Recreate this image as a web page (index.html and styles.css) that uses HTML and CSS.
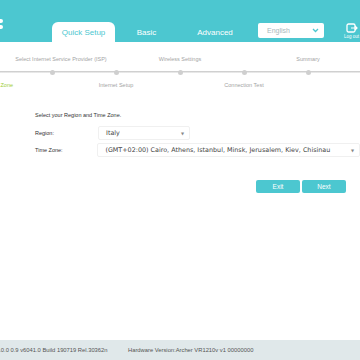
FILE: index.html
```html
<!DOCTYPE html>
<html>
<head>
<meta charset="utf-8">
<link rel="stylesheet" href="styles.css">
</head>
<body>
<div class="page">
  <header class="top">
    <div class="logo"><span class="logo-dot"></span><span class="logo-dot"></span></div>
    <nav class="tabs">
      <div class="tab active">Quick Setup</div>
      <div class="tab">Basic</div>
      <div class="tab adv">Advanced</div>
    </nav>
    <div class="lang"><span>English</span>
      <svg class="chev" width="7" height="5" viewBox="0 0 7 5"><path d="M1 1 L3.5 3.5 L6 1" fill="none" stroke="#4cc7d0" stroke-width="1.3"/></svg>
    </div>
    <div class="logout">
      <svg width="12" height="10" viewBox="0 0 12 10"><rect x="1" y="1" width="8" height="8" rx="1.5" fill="none" stroke="#fff" stroke-width="1.3"/><path d="M5 5 H11 M9 3 L11 5 L9 7" fill="none" stroke="#fff" stroke-width="1.2"/></svg>
      <span>Log out</span>
    </div>
  </header>

  <section class="steps">
    <div class="step done"><div class="lt"></div><div class="track"><i></i></div><div class="lb green first">Time Zone</div></div>
    <div class="step"><div class="lt isp">Select Internet Service Provider (ISP)</div><div class="track"><i></i></div><div class="lb"></div></div>
    <div class="step"><div class="lt"></div><div class="track"><i></i></div><div class="lb">Internet Setup</div></div>
    <div class="step"><div class="lt">Wireless Settings</div><div class="track"><i></i></div><div class="lb"></div></div>
    <div class="step"><div class="lt"></div><div class="track"><i></i></div><div class="lb">Connection Test</div></div>
    <div class="step"><div class="lt">Summary</div><div class="track"><i></i></div><div class="lb"></div></div>
    <div class="step"><div class="lt"></div><div class="track"></div><div class="lb"></div></div>
  </section>

  <main class="content">
    <p class="intro">Select your Region and Time Zone.</p>
    <div class="row">
      <label>Region:</label>
      <div class="select region"><span>Italy</span><span class="arr">&#9660;</span></div>
    </div>
    <div class="row">
      <label>Time Zone:</label>
      <div class="select tz"><span>(GMT+02:00) Cairo, Athens, Istanbul, Minsk, Jerusalem, Kiev, Chisinau</span><span class="arr">&#9660;</span></div>
    </div>
    <div class="buttons">
      <button class="btn">Exit</button>
      <button class="btn">Next</button>
    </div>
  </main>

  <footer class="foot">
    <span class="fw">1.0.0 0.9 v6041.0 Build 190719 Rel.30362n</span>
    <span class="hw">Hardware Version:Archer VR1210v v1 00000000</span>
  </footer>
</div>
</body>
</html>
```
FILE: styles.css
```css
html, body { margin: 0; padding: 0; }
body { width: 360px; height: 360px; overflow: hidden; background: #fff; font-family: "Liberation Sans", Arial, sans-serif; }
.page { width: 360px; height: 360px; display: flex; flex-direction: column; overflow: hidden; }

.top { height: 42px; background: #4cc7d0; display: flex; align-items: flex-end; position: relative; flex-shrink: 0; }
.logo { position: absolute; left: 0; top: 19px; width: 3px; display: flex; flex-direction: column; gap: 2px; }
.logo-dot { display: block; width: 3px; height: 4px; background: #fff; border-radius: 0 2px 2px 0; }
.tabs { display: flex; margin-left: 52px; height: 20px; }
.tab { height: 20px; display: flex; align-items: center; justify-content: center; color: #fff; font-size: 8px; }
.tab.active { width: 63px; background: #fff; color: #4cc7d0; border-radius: 6px 6px 0 0; }
.tab:nth-child(2) { width: 55px; padding-left: 4px; }
.tab.adv { width: 58px; padding-left: 12px; }
.lang { margin-left: 14px; margin-bottom: 4px; width: 66px; height: 15px; background: #fff; border-radius: 2px; display: flex; align-items: center; justify-content: space-between; padding: 0 5px 0 9px; box-sizing: border-box; font-size: 7px; color: #a8b8bc; }
.chev { display: block; }
.logout { margin-left: 20px; margin-bottom: 3px; display: flex; flex-direction: column; align-items: center; color: #fff; font-size: 4.5px; gap: 1px; }
.logout svg { display: block; }

.steps { display: flex; margin-left: -44px; margin-top: 12px; flex-shrink: 0; }
.step { width: 64px; flex-shrink: 0; display: flex; flex-direction: column; align-items: center; font-size: 5.5px; color: #a4a4a4; }
.lt, .lb { height: 10px; white-space: nowrap; display: flex; align-items: center; justify-content: center; width: 64px; overflow: visible; box-sizing: border-box; }
.lt.isp { padding-left: 18px; }
.lb.first { padding-left: 24px; }
.track { width: 64px; height: 6px; margin: 5px 0 5px; display: flex; justify-content: center; align-items: center; background: linear-gradient(#d0d0d0, #d0d0d0) center / 100% 1.5px no-repeat; }
.track i { display: block; width: 5px; height: 5px; border-radius: 50%; background: #cfcfcf; }
.step.done .track i { background: #9ccd3a; }
.lb.green { color: #9ccd3a; }

.content { padding: 20px 0 0 35px; flex: 1; font-size: 5.5px; color: #333; }
.intro { margin: 0 0 6px; height: 10px; line-height: 10px; }
.row { display: flex; align-items: center; height: 14px; margin-bottom: 3px; }
.row label { width: 63px; }
.select { height: 14px; border: 1px solid #f0f0f0; border-radius: 2px; box-sizing: border-box; display: flex; align-items: center; justify-content: space-between; padding: 0 5px 0 7px; font-family: "DejaVu Sans", Verdana, sans-serif; font-size: 6.4px; color: #444; }
.region { width: 92px; }
.tz { width: 265px; }
.arr { font-size: 4px; color: #888; }
.buttons { display: flex; justify-content: flex-end; gap: 2px; margin-top: 23px; padding-right: 14px; }
.btn { width: 44px; height: 13px; border: 0; border-radius: 2px; background: #4cc7d0; color: #fff; font-family: "Liberation Sans", Arial, sans-serif; font-size: 6.5px; padding: 0; }

.foot { height: 20px; background: #e0e8ea; display: flex; align-items: center; font-size: 5.8px; color: #555; flex-shrink: 0; }
.fw { margin-left: -4px; width: 132px; white-space: nowrap; }
.hw { white-space: nowrap; }
```
